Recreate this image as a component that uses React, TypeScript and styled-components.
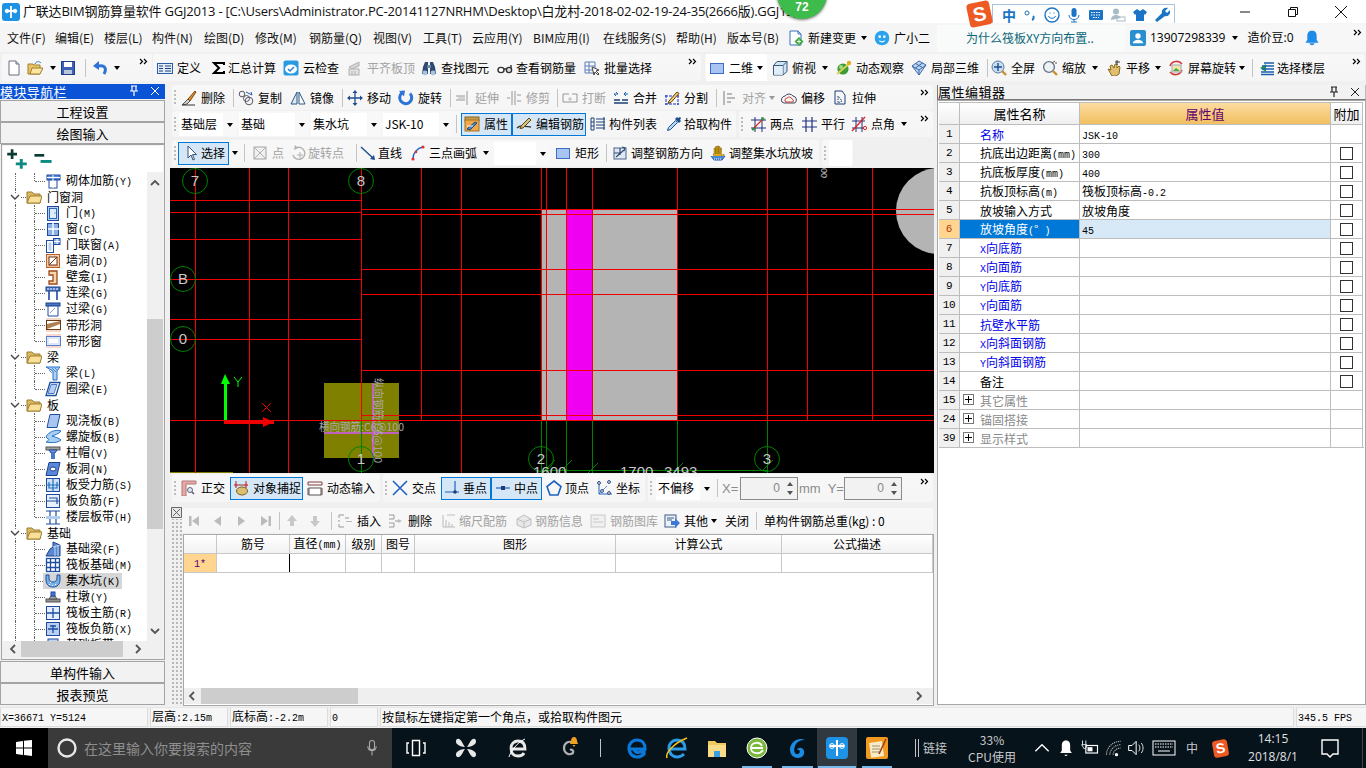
import React from 'react';
import styled, { createGlobalStyle } from 'styled-components';

const UI = `"Noto Sans CJK SC", "Noto Sans", sans-serif`;
const Global = createGlobalStyle`
  html, body { margin: 0; padding: 0; background: #f0f0f0; overflow: hidden; }
  * { box-sizing: border-box; }
  body { font-family: ${UI}; font-size: 12px; color: #000; }
`;

/* ---------- icons ---------- */
const S1 = (d: string, c = '#2a58b0', w = 1) => <path d={d} fill="none" stroke={c} strokeWidth={w} />;
const ICONS: Record<string, React.ReactNode> = {
  new: <><path d="M3 1h7l3 3v11H3z" fill="#fff" stroke="#68707c" /><path d="M10 1v3h3" fill="#dde" stroke="#68707c" /></>,
  open: <><path d="M1 4h5l1 1h6v9H1z" fill="#e8c468" stroke="#a07c2c" /><path d="M3 14l2-6h11l-3 6z" fill="#fbe6a2" stroke="#a07c2c" /><path d="M8 4c1-3 4-3 6-1" fill="none" stroke="#3a7ac0" /></>,
  save: <><rect x="1.5" y="1.5" width="13" height="13" fill="#3d62b8" stroke="#1f3f86" /><rect x="4" y="2" width="8" height="5" fill="#fff" /><rect x="4" y="10" width="8" height="4" fill="#b8c4d8" /></>,
  undo: <><path d="M12 14c3-5 1-9-5-8" fill="none" stroke="#2c74d8" strokeWidth="3" /><path d="M1 6l6-5v9z" fill="#2c74d8" /></>,
  define: <><rect x=".5" y="3.5" width="15" height="10" fill="#e4eefa" stroke="#2a5ca8" />{S1('M2 6h4M2 8.5h4M2 11h4M8 6h6M8 8.5h6M8 11h6', '#1d3f78')}</>,
  sigma: S1('M13 5V3H3l5 5-5 5h10v-2', '#000', 2),
  cloud: <><rect x=".5" y=".5" width="15" height="15" rx="2" fill="#2a9be0" /><ellipse cx="8" cy="9" rx="6" ry="4.5" fill="#fff" />{S1('M5 9l2 2 4-4', '#2a7fd0', 1.5)}</>,
  flush: <><path d="M2 7l10-5v4L5 9z" fill="#ccc" stroke="#999" /><rect x="2" y="9" width="10" height="6" fill="#ddd" stroke="#999" />{S1('M5 11v4M8 11v4', '#999')}</>,
  binoc: <><path d="M2 7l2-5h3v12H1z" fill="#2e4a70" /><path d="M14 7l-2-5H9v12h6z" fill="#2e4a70" /><rect x="6" y="5" width="4" height="3" fill="#6a88aa" /><circle cx="4" cy="13" r="2.4" fill="#a9c4e0" /><circle cx="12" cy="13" r="2.4" fill="#a9c4e0" /></>,
  glasses: <><ellipse cx="4" cy="10" rx="3" ry="2.6" fill="#fff" stroke="#333" strokeWidth="1.4" /><ellipse cx="12" cy="10" rx="2.6" ry="2.6" fill="#ddd" stroke="#333" strokeWidth="1.4" />{S1('M7 9h2M14 8V5', '#333', 1.4)}</>,
  batch: <>{S1('M1 2h10v11H1zM1 6h10M1 10h10M5 2v11', '#5a7fb8')}<path d="M8 7l7 3-3 1 3 3-1 1-3-3-1 3z" fill="#fff" stroke="#444" /></>,
  rect2d: <rect x="1.5" y="3.5" width="13" height="10" fill="#a8c4f0" stroke="#3d6cc4" />,
  cube: <><path d="M1.5 5.5L5 1.5h10v10l-4 3.5h-9.5z" fill="#cfe4f4" stroke="#3a5878" /><path d="M1.5 5.5H11V15M11 5.5l4-4" fill="none" stroke="#3a5878" /><rect x="2" y="6" width="9" height="9" fill="#e8f2fb" opacity=".7" /></>,
  orbit: <><circle cx="7" cy="9" r="5.6" fill="#3d9a3a" /><circle cx="5" cy="7" r="2" fill="#9fdc8a" />{S1('M1 14L14 3', '#dcd050', 2)}<circle cx="13" cy="3" r="2.2" fill="#e0b020" /></>,
  local3d: <><path d="M1 6l7-5 7 4-7 10z" fill="#bcd6f0" stroke="#3a68a8" />{S1('M1 6l7 4 7-5M8 10v5M4.5 3.5l7 4M11.5 3l-7 5', '#3a68a8')}</>,
  fit: <><circle cx="7" cy="7" r="6" fill="#c8dcf2" stroke="#5a7c9c" />{S1('M7 3v8M3 7h8', '#1d4f90', 1.4)}<path d="M11 11l4 4" stroke="#c89030" strokeWidth="2.4" /></>,
  zoom: <><circle cx="7" cy="7" r="5.4" fill="#eef2f6" stroke="#687888" strokeWidth="1.4" />{S1('M10 3l3-2M13 3h2', '#555')}<path d="M11 11l4 4" stroke="#c89030" strokeWidth="2.4" /></>,
  pan: <><path d="M2 9l3 1-1-4 2-1 2 3 1-4 2 0 0 4 2-2 1 1-1 7-3 2H6z" fill="#e0c070" stroke="#8a6a20" />{S1('M11 0v5M9 2h5', '#333')}</>,
  rotscreen: <>{S1('M2 6a7 7 0 0 1 12-2M14 10a7 7 0 0 1-12 2', '#d83838', 1.6)}<rect x="4" y="5" width="9" height="7" fill="#f4e4a8" stroke="#98a8b8" /><path d="M5 11l3-3 4 3z" fill="#4aa84a" /></>,
  floors: <><path d="M1 8l6-4v8z" fill="#2a9a40" />{S1('M5 3h10M3 6h12M3 9h12M2 12h13M2 14.5h13', '#1a5fb0', 1.3)}</>,
  newchange: <><path d="M2 1h8l3 3v11H2z" fill="#fff" stroke="#3a6cc0" /><path d="M10 1v3h3" fill="none" stroke="#3a6cc0" /><path d="M11 7l4.500 4.500L11 16l-4.500-4.500z" fill="#3aa83a" /><path d="M11 9.500v4M9 11.500h4" stroke="#fff" /></>,
  brush: <><path d="M1 15l6-6 2 2-3 3z" fill="#d0d0d0" stroke="#555" /><path d="M7 9l7-8 1 1-6 9z" fill="#d89030" stroke="#804810" /><path d="M1 15h13" stroke="#333" /></>,
  copy: <><circle cx="4" cy="4" r="2.8" fill="none" stroke="#556" /><circle cx="11" cy="11" r="3.8" fill="none" stroke="#556" /><circle cx="8.5" cy="8.5" r="3" fill="none" stroke="#556" />{S1('M8 2l6 3M14 5l-1-3', '#2a58b0')}</>,
  mirror: <><path d="M7 2v12H1z" fill="#dde8f8" stroke="#2a5880" /><path d="M9 2v12h6z" fill="#fff" stroke="#2a5880" /></>,
  move: <>{S1('M8 1v14M1 8h14', '#1d4f90', 1.3)}<path d="M8 0l2.5 3h-5zM8 16l2.5-3h-5zM0 8l3-2.5v5zM16 8l-3-2.5v5z" fill="#1d4f90" /></>,
  rotate: <>{S1('M12 3.5A6 6 0 1 1 4 3', '#2c74d8', 3)}<path d="M1 1l6-.5-1 6z" fill="#2c74d8" /></>,
  extend: <>{S1('M1 6h9M1 10h9M12 1v14', '#777')}<path d="M10 8H3" stroke="#999" /></>,
  trim: <>{S1('M6 1v14M9 1v14M1 8h3M11 5h4M11 11h4', '#777')}</>,
  break: <>{S1('M1 4h6M10 4h5M1 12h14M1 4v8M15 4v8', '#777')}<path d="M6 9h4M8 7v4" stroke="#9ab" /></>,
  merge: <><path d="M1 4h4l-2-2M1 4l2 2M15 4h-4l2-2M11 4l2 2" fill="none" stroke="#1a5fb0" />{S1('M1 10h6M9 10h6M1 13h14', '#1d3f78', 1.4)}</>,
  split: <><path d="M1 6h14M1 14h14M2 5v10M14 5v10" stroke="#1a2fd0" fill="none" strokeDasharray="3 1" /><path d="M5 11L13 2l2 1.4-8 9-3 1z" fill="#f0d080" stroke="#604000" /></>,
  align: <>{S1('M2 1v14M5 4h5M5 8h8M5 12h4', '#888', 1.5)}</>,
  offset: <><path d="M1 12a4 4 0 0 1 3-6 5 5 0 0 1 8 0 4 4 0 0 1 2 7H3z" fill="#f4f4f4" stroke="#404a60" /><path d="M4 11a2.5 2.5 0 0 1 2-3 3 3 0 0 1 5 1 2 2 0 0 1 1 3H5z" fill="none" stroke="#d04030" /></>,
  stretch: <>{S1('M3 1h7l3 4v9H3z', '#1d3f78')}<path d="M6 6v7l4-2z" fill="none" stroke="#1d3f78" strokeDasharray="1.5 1" /></>,
  attr: <><rect x="1" y="1" width="14" height="4" fill="#c8a050" stroke="#886020" /><rect x="1" y="4" width="14" height="11" fill="#f0a848" stroke="#a87020" /><path d="M3 13l8-7 2 1-7 7z" fill="#4a88d8" stroke="#284870" /><path d="M3 10h6" stroke="#fff" /></>,
  editbar: <><path d="M1 12c3-3 6-2 14-1" fill="none" stroke="#333" strokeWidth="1.4" /><path d="M5 10L13 2l2 2-8 8-3 .5z" fill="#d8c080" stroke="#604010" /></>,
  list: <>{S1('M1 2h3v12H1zM6 3h9M6 6h9M6 9h9M6 12h9M1 6h3M1 10h3M14 1v13', '#1d3f78')}</>,
  dropper: <><path d="M1.5 14.5l1-3 7-7 2 2-7 7z" fill="#b8d8f8" stroke="#1d4f90" /><path d="M9 3l2-2 1 1 2-1 1 1-1 2 1 1-2 2z" fill="#1d4f90" /></>,
  twopt: <>{S1('M1 4h15M1 12h15M5 1v15M12 1v15', '#203080')}<path d="M2 14L14 2" stroke="#d82020" strokeWidth="1.2" /><circle cx="3.5" cy="13" r="1.5" fill="#2a9a40" /><circle cx="13" cy="3" r="1.5" fill="#2a9a40" /></>,
  parallel: <>{S1('M1 5h15M1 11h15M5 1v15M11 1v15', '#203080', 1.2)}</>,
  ptangle: <>{S1('M1 5h13M1 12h13M5 1v15M11 1v15', '#203080')}<path d="M1 15L14 1" stroke="#e02020" strokeWidth="1.3" /><circle cx="14" cy="12" r="1.6" fill="#fff" stroke="#e02020" /></>,
  cursor: <path d="M4 1v12l3-3 2 5 1.5-.6-2-4.8h4z" fill="#fff" stroke="#385078" />,
  point: <><rect x="2" y="2" width="12" height="12" fill="#eee" stroke="#888" />{S1('M2 2l12 12M14 2L2 14', '#999')}</>,
  rotpt: <>{S1('M3 10A6 6 0 1 0 6 3', '#999', 1.4)}<path d="M5 0l3 3-4 2z" fill="#999" />{S1('M10 7v6M7 10h6', '#999')}</>,
  line: <><path d="M1 2l13 12" stroke="#1d4f90" strokeWidth="1.4" /><path d="M15 15l-5-1 4-4z" fill="#1d4f90" /></>,
  arc: <>{S1('M3 14C3 8 7 3 13 2', '#2060c0', 1.4)}<circle cx="3" cy="14" r="1.6" fill="#e03030" /><circle cx="13" cy="2" r="1.6" fill="#e03030" /><circle cx="6" cy="7" r="1.3" fill="#e03030" /></>,
  adjdir: <><rect x="2" y="3" width="12" height="11" fill="#dfe8f4" stroke="#4a6488" />{S1('M4 12L12 5M10 2l3 1-1 3M2 8h6M8 3v7', '#334c70', 1.2)}</>,
  adjslope: <><path d="M4 9V3h1.500v6-7.500H7V9 1h1.500v8-7.500H10V9 3h1.500v8l2-2 1 1-2 3H5L3 9z" fill="#d8a818" stroke="#886810" strokeWidth=".5" /><path d="M1 11l3 4h8l3-4" fill="#4a88d8" stroke="#2a58b0" /><path d="M4 14h8" stroke="#fff" strokeDasharray="1 1" /></>,
  ortho: <><path d="M1 1h14v3H5v12H1z" fill="#e8a8a8" stroke="#b07878" />{S1('M8 9l5 5', '#556', 1.4)}<circle cx="9" cy="10" r="2.5" fill="#dde8f4" stroke="#667" /></>,
  snap: <>{S1('M3 1v7M13 1v7M1 5h14', '#903030')}<ellipse cx="9" cy="11" rx="5.500" ry="4" fill="#d8c070" stroke="#806020" /><circle cx="3" cy="5" r="1.5" fill="#e04040" /><circle cx="13" cy="5" r="1.5" fill="#e04040" /></>,
  dyn: <>{S1('M1 2h14M1 5h14M1 2v3M15 2v3M1 8v7M15 8v7', '#804040')}<rect x="2" y="8" width="12" height="7" fill="#fff" stroke="#555" /></>,
  cross: S1('M1 1l14 14M15 1L1 15', '#1f62c0', 1.6),
  perp: <>{S1('M1 12h14M11 1v11', '#1f62c0', 1.2)}<circle cx="11" cy="12" r="1.8" fill="#1d3f78" /></>,
  mid: <>{S1('M1 8h14', '#1f62c0', 1.2)}<rect x="6" y="6" width="4" height="4" fill="#1d3f78" /></>,
  vertex: <path d="M8 1l7 5.500-3 8.500H4L1 6.500z" fill="none" stroke="#1f62c0" strokeWidth="1.6" />,
  coord: <>{S1('M3 1v13h13', '#1f62c0', 1)}<path d="M3 14l8-8" stroke="#1f62c0" strokeDasharray="2 1" /><circle cx="3" cy="3" r="1.4" fill="#fff" stroke="#1d3f78" /><circle cx="13" cy="2" r="1.4" fill="#fff" stroke="#1d3f78" /><circle cx="6" cy="11" r="1.4" fill="#fff" stroke="#1d3f78" /><circle cx="13" cy="13" r="1.4" fill="#fff" stroke="#1d3f78" /></>,
  first: <><rect x="3" y="3" width="2.500" height="10" fill="#bbb" /><path d="M13 3v10L6 8z" fill="#bbb" /></>,
  prev: <path d="M11 3v10L4 8z" fill="#bbb" />,
  next: <path d="M5 3v10l7-5z" fill="#bbb" />,
  last: <><rect x="10.500" y="3" width="2.500" height="10" fill="#bbb" /><path d="M3 3v10l7-5z" fill="#bbb" /></>,
  up: <path d="M8 2l5 6h-3v5H6V8H3z" fill="#c8c8c8" />,
  down: <path d="M8 14l5-6h-3V3H6v5H3z" fill="#c8c8c8" />,
  insert: <>{S1('M2 2h5M2 2v3M2 7v2M2 11v3h5M8 5h4', '#999')}<path d="M9 8h6v1H9z" fill="#bbb" /></>,
  del: <>{S1('M1 2h5v4M1 6h5M1 10h5v4H1M7 8h3', '#999')}<path d="M10 6v4l4-2z" fill="#bbb" /></>,
  scale: <>{S1('M2 2v12h12M5 14V7M8 14V9M11 14v-3M6 2l8 0', '#aaa')}</>,
  info: <><path d="M1 6l7-4 7 4v6l-7 3-7-3z" fill="#e4e4e4" stroke="#aaa" />{S1('M1 6l7 3 7-3M8 9v6', '#aaa')}</>,
  lib: <><rect x="1" y="2" width="14" height="12" fill="#eee" stroke="#bbb" />{S1('M3 6h6M3 9h10', '#bbb')}</>,
  other: <><rect x="1" y="2" width="11" height="12" fill="#eef2f8" stroke="#3a5a88" />{S1('M3 5h7M3 7h5', '#3a5a88')}<path d="M7 8h4V5l5 5-5 5v-3H7z" fill="#3d78d8" /></>,
  folder: <><path d="M1 3h5l2 2h6v9H1z" fill="#d8b860" stroke="#9c7c30" /><path d="M1 14l3-7h12l-2 7z" fill="#f8e098" stroke="#9c7c30" /></>,
  masonry: <><rect x="2" y="2" width="13" height="5" fill="#5a8ad8" stroke="#2048a0" /><rect x="2" y="2" width="13" height="5" fill="none" /><rect x="4" y="7" width="8" height="8" fill="#fff" stroke="#2048a0" />{S1('M8 2v13M2 4.500h13', '#fff')}</>,
  door: <><rect x="2.500" y="1.500" width="11" height="14" fill="#b8cff0" stroke="#2048a0" /><rect x="4.500" y="3.500" width="7" height="10" fill="#e0ecfa" stroke="#2a68c8" /><rect x="9.500" y="7.500" width="1" height="1" fill="#2048a0" /></>,
  window: <><rect x="2.500" y="2.500" width="11" height="12" fill="#8ab0e8" stroke="#2048a0" />{S1('M8 2v12M3 8h11', '#fff', 1.4)}</>,
  doorwin: <><rect x="1.500" y="3.500" width="7" height="12" fill="#fff" stroke="#2048a0" /><rect x="8.500" y="1.500" width="6.500" height="6" fill="#8ab0e8" stroke="#2048a0" />{S1('M12 2v5M9 4.500h6', '#fff')}<rect x="3.500" y="5.500" width="3" height="8" fill="#b8cff0" /></>,
  wallhole: <><rect x="1.500" y="1.500" width="13" height="13" fill="#f4d8c0" stroke="#b85820" />{S1('M1 5h14M1 9h14M1 13h14M5 1v14M10 1v14', '#e09868', .7)}<rect x="4" y="4" width="8" height="8" fill="#fff" stroke="#703010" />{S1('M4 12l8-8', '#703010')}</>,
  niche: <path d="M4 2h8v13H4v-3h4V6H4z" fill="#f4d8b0" stroke="#a04818" strokeWidth="1.300" />,
  lintel1: <><rect x="1" y="2" width="14" height="4" fill="#4878c8" stroke="#1d3f88" />{S1('M4 6v9M12 6v9', '#2048a0', 1.600)}<path d="M3 3v2M6 3v2M9 3v2M12 3v2" stroke="#fff" /></>,
  lintel2: <><rect x="1" y="2" width="14" height="3" fill="#4878c8" stroke="#1d3f88" /><path d="M3 5h10v10H3z" fill="#fff" stroke="#2048a0" /><path d="M5 12l5-5" stroke="#7a9ad8" /></>,
  stripe1: <><rect x="1" y="1" width="15" height="14" fill="#f4d8c8" /><rect x="1.500" y="3.500" width="14" height="9" fill="#fff" stroke="#6a3a10" /><path d="M2 12L15 7V4L2 7z" fill="#b08050" /></>,
  stripe2: <><rect x="1" y="1" width="15" height="14" fill="#f8d8d0" /><rect x="1.500" y="3.500" width="14" height="9" fill="#dce8fa" stroke="#5a7fc8" /><rect x="4" y="6" width="9" height="4" fill="#fff" /></>,
  beam: <><path d="M1 2h14l-3 4v9H8V6z" fill="#b0d0f4" stroke="#2870c8" />{S1('M4 5l3 3M7 3l4 4M10 3l2 2', '#2870c8', .8)}</>,
  ringbeam: <><path d="M5 1.500h10l-4 13H1z" fill="#fff" stroke="#1d4fa0" strokeWidth="1.300" /><path d="M6 3.500h6l-3 9H3z" fill="#b8d0f0" stroke="#4a78c8" /></>,
  slab: <path d="M5 1.500h10l-3 13H2z" fill="#a8c4f0" stroke="#1d4fa0" />,
  spiral: <><path d="M1 8c2-5 10-8 15-6-2 3-7 4-9 5 3 1 7 2 9 4-3 3-10 3-15 2 2-1 4-3 2-3z" fill="#a8d0f4" stroke="#2870c8" /></>,
  cap: <><rect x="1" y="2" width="14" height="3" fill="#a0a0a0" stroke="#555" /><path d="M4 5h8l-2 3H6z" fill="#6a9ae0" stroke="#2048a0" /><rect x="6" y="8" width="4" height="6" fill="#4a78c8" /></>,
  slabhole: <><path d="M4 1.500h11l-3 13H1z" fill="#5a88d8" stroke="#1d3f88" /><ellipse cx="8" cy="8" rx="3" ry="2" fill="#fff" stroke="#1d3f88" /></>,
  slabbar: <><rect x="1.500" y="1.500" width="13" height="13" fill="#d0e0f8" stroke="#2048a0" />{S1('M1 8h14M8 1v14M4 5v6h8V5', '#1d6fc0', 1.200)}</>,
  neg: <><rect x="1.500" y="1.500" width="13" height="13" fill="#e8f0fc" stroke="#2048a0" />{S1('M1 8h14M4 5h8v6', '#1d4fa0', 1.200)}</>,
  band: <>{S1('M1 2h14M1 15h14M5 2v13M11 2v13', '#1d4fa0', 1.200)}<rect x="1" y="7" width="14" height="3" fill="#b0cff0" /></>,
  fbeam: <><path d="M1 15l4-7 3-2V1l7 3v11z" fill="#5a88d0" stroke="#1d3f88" />{S1('M8 6l7-2M10 5v10M13 4v11', '#c0d8f4')}</>,
  raft: <><rect x="1.500" y="1.500" width="13" height="13" fill="#fff" stroke="#1d4fa0" strokeWidth="1.300" />{S1('M1 5.500h14M1 10.500h14M5.500 1v14M10.500 1v14', '#1d4fa0', 1.300)}</>,
  pit: <><path d="M1 2v4c0 6 3 8 7 8s7-2 7-8V2h-3v3c0 3-2 4-4 4S4 8 4 5V2z" fill="#7ab0e8" stroke="#1d4fa0" /><path d="M4 11l1 1M7 12l1 1M10 11l1 1M5 9l1 1" stroke="#fff" /></>,
  pier: <><rect x="1" y="10" width="14" height="3" fill="#909090" stroke="#555" /><path d="M4 10l2-3h4l2 3z" fill="#a8a8a8" stroke="#555" /><rect x="6" y="3" width="4" height="4" fill="#4a78c8" stroke="#2048a0" /></>,
  rmain: <><rect x="1.500" y="1.500" width="13" height="13" fill="#e4eefc" stroke="#2048a0" />{S1('M1 8h14M8 3v10', '#1d4fa0', 1.300)}</>,
  rneg: <><rect x="1.500" y="1.500" width="13" height="13" fill="#b8cff0" stroke="#2048a0" />{S1('M3 8h10M8 4v8M5 5h6', '#1d4fa0', 1.300)}</>,
  extra: <><rect x="3" y="2" width="10" height="12" fill="#c0d4f0" stroke="#2048a0" /></>,
};
const IconSvg = styled.svg.attrs({ viewBox: '0 0 16 16' })`
  width: 16px; height: 16px; flex: none; display: block;
`;
const Icon = ({ n }: { n: string }) => <IconSvg>{ICONS[n]}</IconSvg>;

const Caret = styled.i<{ $gray?: boolean }>`
  display: block; flex: none; width: 0; height: 0;
  border-left: 3.5px solid transparent; border-right: 3.5px solid transparent;
  border-top: 4px solid ${p => (p.$gray ? '#999' : '#000')};
`;

/* ---------- text with narrow latin, as bitmap SimSun draws it ---------- */
const Lat = styled.span`font-family: "Liberation Mono", monospace; font-size: 10px;`;
const Mixed = ({ t }: { t: string }) => (
  <>{t.split(/([\x00-\x7f]+)/).map((s, i) => (i % 2 ? <Lat key={i}>{s}</Lat> : s))}</>
);

/* ---------- toolbars ---------- */
type Item =
  | { k: 't'; i?: string; l?: string; w?: number; gray?: boolean; on?: boolean; white?: boolean; p?: number; gap?: number }
  | { k: 'c'; w: number; gray?: boolean; white?: boolean }
  | { k: 'p'; w: number; white?: boolean }
  | { k: 's'; w: number }
  | { k: 'g'; w: number }
  | { k: 'b'; w: number; l?: string }
  | { k: 'n'; w: number }
  | { k: 'x'; w: number; l: string };
const t = (i: string | undefined, l: string | undefined, w: number | undefined, o: any = {}): Item => ({ k: 't', i, l, w, ...o });
const c = (w: number, o: any = {}): Item => ({ k: 'c', w, ...o });
const p = (w: number, white?: boolean): Item => ({ k: 'p', w, white });
const s = (w: number): Item => ({ k: 's', w });
const g = (w: number): Item => ({ k: 'g', w });
const b = (w: number, l?: string): Item => ({ k: 'b', w, l });
const GR = { gray: true };

const Bar = styled.div<{ $w: number; $h?: number }>`
  display: flex; align-items: center; flex: none; position: relative;
  width: ${x => x.$w}px; height: ${x => x.$h ?? 27}px;
  background: linear-gradient(#f8f8f8, #f5f5f5); border-radius: 3px;
`;
const Tool = styled.div<{ $w?: number; $gray?: boolean; $on?: boolean; $white?: boolean; $p?: number; $gap?: number }>`
  display: flex; align-items: center; flex: none; height: ${x => (x.$on ? '23px' : '100%')};
  ${x => (x.$w ? `width: ${x.$w}px;` : '')}
  gap: ${x => x.$gap ?? 4}px; padding-left: ${x => x.$p ?? 0}px;
  color: ${x => (x.$gray ? '#a2a2a2' : '#000')}; font-size: 12px; white-space: nowrap; line-height: 1;
  ${x => (x.$white ? 'background: #fff;' : '')}
  ${x => (x.$on ? 'background: #d5e7f7; border: 1px solid #0078d7;' : '')}
  ${x => (x.$gray ? 'svg { filter: grayscale(1); opacity: .75; }' : '')}
`;
const CaretBox = styled.div<{ $w: number; $white?: boolean }>`
  display: flex; align-items: center; justify-content: center; flex: none; height: 100%;
  width: ${x => x.$w}px; ${x => (x.$white ? 'background: #fff;' : '')}
`;
const Gap = styled.div<{ $w: number; $white?: boolean }>`
  flex: none; height: 100%; width: ${x => x.$w}px; ${x => (x.$white ? 'background: #fff;' : '')}
`;
const Sep = styled.div<{ $w: number }>`
  flex: none; width: ${x => x.$w}px; height: 18px; display: flex; justify-content: center;
  &::before { content: ''; width: 1px; background: #c4c4c4; }
`;
const Grip = styled.div<{ $w: number }>`
  flex: none; width: ${x => x.$w}px; height: 15px; padding-left: 2px;
  &::before { content: ''; display: block; width: 2px; height: 100%;
    background: repeating-linear-gradient(#bcbcbc 0 2px, transparent 2px 4px); }
`;
const Combo = styled.div<{ $w: number }>`
  flex: none; width: ${x => x.$w}px; height: 23px; background: #fff; display: flex; align-items: center;
  font-size: 12px; padding-left: 2px; position: relative; line-height: 1;
  &::after { content: ''; position: absolute; right: 0; top: 0; bottom: 0; width: 13px; background: #f8f8f8; }
`;
const ComboCaret = styled(Caret)`position: absolute; right: 3px; top: 10px; z-index: 1;`;
const Spin = styled.div<{ $w: number }>`
  flex: none; width: ${x => x.$w}px; height: 23px; border: 1px solid #8a8a8a; background: #f2f2f2;
  display: flex; align-items: center; justify-content: flex-end; padding-right: 17px; color: #888; font-size: 12px;
  font-family: "Liberation Sans", sans-serif; position: relative;
`;
const SpinUp = styled.i`position: absolute; right: 4px; top: 4px; width: 0; height: 0;
  border-left: 3px solid transparent; border-right: 3px solid transparent; border-bottom: 4px solid #555;`;
const SpinDown = styled.i`position: absolute; right: 4px; bottom: 4px; width: 0; height: 0;
  border-left: 3px solid transparent; border-right: 3px solid transparent; border-top: 4px solid #555;`;
const GrayText = styled.div<{ $w: number }>`
  flex: none; width: ${x => x.$w}px; color: #8c8c8c; font-size: 13px; white-space: pre;
  font-family: "Liberation Sans", sans-serif; line-height: 1; padding-left: 1px;
`;
const ChevSvg = styled.svg.attrs({ viewBox: '0 0 9 7' })`
  position: absolute; right: 4px; top: 4px; width: 9px; height: 7px;
`;
const Chev = () => <ChevSvg><path d="M1 1l2.500 2.500L1 6M5 1l2.500 2.500L5 6" fill="none" stroke="#000" strokeWidth="1.200" /></ChevSvg>;

const Tools = ({ items }: { items: Item[] }) => (
  <>
    {items.map((it, i) => {
      switch (it.k) {
        case 't':
          return (
            <Tool key={i} $w={it.w} $gray={it.gray} $on={it.on} $white={it.white} $p={it.p} $gap={it.gap}>
              {it.i && <Icon n={it.i} />}
              {it.l && <span>{it.l}</span>}
            </Tool>
          );
        case 'c': return <CaretBox key={i} $w={it.w} $white={it.white}><Caret $gray={it.gray} /></CaretBox>;
        case 'p': return <Gap key={i} $w={it.w} $white={it.white} />;
        case 's': return <Sep key={i} $w={it.w} />;
        case 'g': return <Grip key={i} $w={it.w} />;
        case 'b': return <Combo key={i} $w={it.w}>{it.l}<ComboCaret /></Combo>;
        case 'n': return <Spin key={i} $w={it.w}>0<SpinUp /><SpinDown /></Spin>;
        case 'x': return <GrayText key={i} $w={it.w}>{it.l}</GrayText>;
      }
    })}
  </>
);

/* ---------- page frame ---------- */
const Root = styled.div`
  width: 1366px; height: 768px; display: flex; flex-direction: column; position: relative; overflow: hidden; background: #f0f0f0;
`;
const TitleBar = styled.div`
  flex: none; height: 23px; background: #fff; display: flex; align-items: center; padding-left: 2px;
`;
const AppLogo = styled.svg.attrs({ viewBox: '0 0 18 18' })`width: 18px; height: 18px; flex: none; margin-right: 3px;`;
const TitleText = styled.div`
  font-family: "Open Sans", "Noto Sans CJK SC", sans-serif; font-size: 13px; letter-spacing: -.2px; white-space: nowrap; width: 772px; overflow: hidden; line-height: 23px; color: #111;
`;
const WinBtns = styled.div`margin-left: auto; display: flex; align-items: center; height: 100%;`;
const WinBtn = styled.svg.attrs({ viewBox: '0 0 12 12' })`width: 12px; height: 12px; margin: 0 19px 0 17px; overflow: visible;`;
const Badge = styled.div`
  position: absolute; left: 777px; top: -31px; width: 50px; height: 50px; border-radius: 50%;
  background: #3dbb4b; box-shadow: 0 1px 3px rgba(0,0,0,.55); color: #fff; font-family: "Liberation Sans", sans-serif; font-size: 12px; font-weight: 700;
  display: flex; align-items: flex-end; justify-content: center; padding-bottom: 6px; line-height: 1;
`;
const Ime = styled.div`
  position: absolute; left: 968px; top: 3px; width: 207px; height: 24px; display: flex; align-items: center;
`;
const ImeS = styled.div`
  position: absolute; left: 0; top: -1px; width: 23px; height: 24px; border-radius: 4px; background: #ee5a24; transform: rotate(-12deg);
  color: #fff; font-family: "Liberation Sans", sans-serif; font-weight: 700; font-size: 20px; line-height: 24px; text-align: center; z-index: 1;
`;
const ImeBar = styled.div`
  margin-left: 24px; width: 183px; height: 23px; background: #fff; border: 1px solid #a9c3dc; display: flex; align-items: center; padding-left: 9px; gap: 5px; color: #1b74c5;
`;
const ImeZh = styled.span`font-size: 14px; font-weight: 700; line-height: 1; width: 15px;`;
const ImeSvg = styled.svg.attrs({ viewBox: '0 0 16 16' })`width: 16px; height: 16px; flex: none; margin-right: 1px;`;

const MenuBar = styled.div`flex: none; height: 29px; display: flex; align-items: center; background: #f5f5f5; padding-left: 7px; position: relative;`;
const MenuItem = styled.div<{ $w: number }>`flex: none; width: ${x => x.$w}px; font-size: 12px; white-space: nowrap; line-height: 1; color: #111;`;
const AskPanel = styled.div`
  flex: none; width: 429px; height: 27px; margin-top: 1px; background: #f7f7f7; border-radius: 3px; display: flex; align-items: center; position: relative; font-size: 12px; line-height: 1;
`;
const Ask = styled.div`
  width: 188px; height: 100%; background: #f9fbfb; color: #0c6878; display: flex; align-items: center; padding-left: 29px; flex: none; font-size: 12px;
`;
const AskUser = styled.div<{ $p: number }>`display: flex; align-items: center; gap: 4px; padding-left: ${x => x.$p}px; font-size: 12px; font-family: "Open Sans", "Noto Sans CJK SC", sans-serif;`;
const TopRow = styled.div`flex: none; height: 32px; display: flex; padding: 2px 2px 0; gap: 1px;`;

const Main = styled.div`flex: none; height: 623px; display: flex;`;
const Left = styled.div`flex: none; width: 165px; display: flex; flex-direction: column;`;
const NavTitle = styled.div`
  flex: none; height: 15px; background: #0a52d6; color: #fff; font-size: 13px; letter-spacing: .4px; line-height: 15px; padding-left: 0; position: relative; margin-bottom: 1px;
`;
const PaneCtl = styled.div<{ $dark?: boolean }>`position: absolute; right: 4px; top: 1px; display: flex; gap: 9px; color: ${x => (x.$dark ? '#222' : '#fff')};`;
const CtlSvg = styled.svg.attrs({ viewBox: '0 0 12 12' })`width: 12px; height: 12px; display: block;`;
const Ctl = () => (
  <>
    <CtlSvg><path d="M3 1h6M4 1v5h4V1M2 6h8M6 6v5" fill="none" stroke="currentColor" strokeWidth="1.200" /></CtlSvg>
    <CtlSvg><path d="M2 2l8 8M10 2l-8 8" fill="none" stroke="currentColor" /></CtlSvg>
  </>
);
const NavBtn = styled.div`
  flex: none; height: 22px; border: 1px solid #a4a4a4; background: #f2f2f2; font-size: 13px; display: flex; align-items: center; justify-content: center; line-height: 1;
`;
const TreePane = styled.div`
  flex: none; height: 516px; border: 1px solid #a4a4a4; background: #f2f2f2; padding: 1px; display: flex; flex-direction: column; margin: 0 0 1px 1px; width: 164px;
`;
const TreeTools = styled.div`flex: none; height: 26px; background: #fff; display: flex; align-items: center; padding-left: 3px; gap: 4px;`;
const TreeBtnSvg = styled.svg.attrs({ viewBox: '0 0 18 18' })`width: 22px; height: 22px;`;
const TreeBody = styled.div`flex: none; height: 469px; display: flex;`;
const Tree = styled.div`flex: none; width: 144px; background: #fff; overflow: hidden; padding-top: 1px;`;
const Row = styled.div<{ $group?: boolean; $last?: boolean }>`
  height: 16px; display: flex; align-items: center; position: relative; white-space: nowrap; font-size: 12px; line-height: 1;
  padding-left: ${x => (x.$group ? '23px' : '42px')};
  &::before { content: ''; position: absolute; left: 12px; top: 0; bottom: 0; border-left: 1px dotted #666; }
  ${x => (x.$group ? '' : `&::after { content: ''; position: absolute; left: 31px; top: 0;
     height: ${x.$last ? '8px' : '100%'}; border-left: 1px dotted #666; }`)}
`;
const HDot = styled.i`position: absolute; left: 32px; top: 8px; width: 10px; border-top: 1px dotted #666;`;
const HDotG = styled.i`position: absolute; left: 18px; top: 8px; width: 5px; border-top: 1px dotted #666;`;
const RowBody = styled.div<{ $sel?: boolean }>`
  display: flex; align-items: center; gap: 5px; height: 16px; position: relative; z-index: 1;
  ${x => (x.$sel ? 'background: #d6d6d6; margin-left: -2px; padding: 0 2px;' : '')}
`;
const GroupBody = styled.div`display: flex; align-items: center; gap: 5px; height: 16px; position: relative; z-index: 1;`;
const Down = styled.svg.attrs({ viewBox: '0 0 10 7' })`position: absolute; left: 7px; top: 5px; width: 10px; height: 7px; z-index: 1; background: #fff;`;
const VScroll = styled.div`flex: none; width: 16px; background: #f0f0f0; display: flex; flex-direction: column; align-items: center;`;
const ArrowSvg = styled.svg.attrs({ viewBox: '0 0 10 10' })`width: 10px; height: 10px; flex: none;`;
const Thumb = styled.div<{ $h?: number; $w?: number }>`
  flex: none; background: #cdcdcd; ${x => (x.$h ? `height: ${x.$h}px; width: 100%;` : '')} ${x => (x.$w ? `width: ${x.$w}px; height: 100%;` : '')}
`;
const VSpace = styled.div<{ $h: number }>`flex: none; height: ${x => x.$h}px;`;
const HScroll = styled.div<{ $l: number }>`
  flex: none; height: 16px; background: #f0f0f0; display: flex; align-items: center; padding-left: ${x => x.$l}px; position: relative;
`;
const HArrow = styled(ArrowSvg)<{ $side: 'l' | 'r'; $o: number }>`position: absolute; ${x => (x.$side === 'l' ? 'left' : 'right')}: ${x => x.$o}px; top: 3px;`;

const Split = styled.div`flex: none; width: 5px;`;
const Center = styled.div`flex: none; width: 767px; padding-top: 1px; display: flex; flex-direction: column;`;
const BarRow = styled.div<{ $mt?: number }>`flex: none; display: flex; gap: 3px; padding-left: 2px; margin-top: ${x => x.$mt ?? 0}px;`;
const Canvas = styled.svg.attrs({ viewBox: '170 168 764 305' })`
  flex: none; display: block; width: 764px; height: 305px; margin-top: 2px; background: #000;
`;
const GridPane = styled.div`flex: none; height: 200px; margin-top: 3px; display: flex;`;
const GripCol = styled.div`flex: none; width: 12px; position: relative;
  background-image: radial-gradient(#b8b8b8 40%, transparent 42%); background-size: 4px 4px; background-position: 1px 16px; background-repeat: repeat;
  background-clip: content-box; padding-top: 14px;
`;
const CloseBox = styled.svg.attrs({ viewBox: '0 0 11 11' })`position: absolute; left: 1px; top: 2px; width: 11px; height: 11px; background: #e8e8e8;`;
const GridBody = styled.div`flex: none; width: 752px; display: flex; flex-direction: column;`;
const GridBar = styled(Bar)`height: 25px; margin-top: 3px; width: 751px;`;
const GridTable = styled.div`flex: none; height: 172px; background: #fff; border: 1px solid #a8a8a8; margin-top: 1px; margin-left: 1px; width: 751px; position: relative; display: flex; flex-direction: column;`;
const GHead = styled.div`flex: none; display: flex; height: 19px; border-bottom: 1px solid #c8c8c8; background: linear-gradient(#fff,#f2f2f2);`;
const GRow = styled.div`flex: none; display: flex; height: 19px; border-bottom: 1px solid #c8c8c8;`;
const GCell = styled.div<{ $w: number; $cur?: boolean; $num?: boolean }>`
  flex: none; width: ${x => x.$w}px; display: flex; align-items: center; justify-content: center; font-size: 12px; line-height: 1;
  border-right: 1px solid ${x => (x.$cur ? '#000' : '#c8c8c8')};
  ${x => (x.$num ? 'background: #ffd590; color: #50007a;' : '')}
`;
const GridScroll = styled(HScroll)`margin-top: auto; background: #efefef; height: 16px; margin-bottom: 1px;`;

const Right = styled.div`flex: none; width: 429px; display: flex; flex-direction: column; padding-top: 1px;`;
const PropTitle = styled.div`
  flex: none; height: 15px; background: #f2f2f2; border: 1px solid #777; border-top: 0; border-right-color: #bbb; font-size: 13px; letter-spacing: .5px; line-height: 14px; position: relative;
`;
const PropPane = styled.div`
  flex: none; height: 605px; background: #fff; border: 1px solid #a8a8a8; padding: 1px;
`;
const PropGrid = styled.div`
  display: grid; grid-template-columns: 21px 120px 251px 32px; border-bottom: 1px solid #bdbdbd; width: 425px;
`;
const Cell = styled.div<{ $h?: number; $kind?: string; $color?: string }>`
  height: ${x => x.$h ?? 19}px; border-right: 1px solid #bdbdbd; border-top: 1px solid #bdbdbd; display: flex; align-items: center; font-size: 12px; line-height: 1; white-space: nowrap; position: relative;
  color: ${x => x.$color ?? '#000'};
  ${x => x.$kind === 'num' ? 'justify-content: center; background: #f0f0f0; font-family: "Liberation Mono", monospace; font-size: 11px; letter-spacing: -.4px;' : ''}
  ${x => x.$kind === 'numsel' ? 'justify-content: center; background: #ffd590; color: #b83c10; font-family: "Liberation Mono", monospace; font-size: 11px;' : ''}
  ${x => x.$kind === 'name' ? 'padding: 2px 0 0 20px;' : ''}
  ${x => x.$kind === 'namesel' ? 'padding: 2px 0 0 20px; background: #0078d7; color: #fff;' : ''}
  ${x => x.$kind === 'val' ? 'padding: 1px 0 0 2px;' : ''}
  ${x => x.$kind === 'valsel' ? 'padding: 1px 0 0 2px; background: #d7e8f7;' : ''}
  ${x => x.$kind === 'chk' ? 'justify-content: center;' : ''}
  ${x => x.$kind === 'hd' ? 'justify-content: center; background: linear-gradient(#fff,#efefef); font-size: 13px;' : ''}
  ${x => x.$kind === 'hdv' ? 'justify-content: center; background: linear-gradient(#fcdca0,#f0bf60); color: #640070; font-size: 13px;' : ''}
`;
const Check = styled.i`display: block; width: 13px; height: 13px; border: 1px solid #333; background: #fff;`;
const PlusBox = styled.i`
  position: absolute; left: 3px; top: 3px; width: 11px; height: 11px; border: 1px solid #777; background: #fff;
  &::before { content: ''; position: absolute; left: 1px; right: 1px; top: 4px; height: 1px; background: #000; }
  &::after { content: ''; position: absolute; top: 1px; bottom: 1px; left: 4px; width: 1px; background: #000; }
`;

const Status = styled.div`flex: none; height: 21px; display: flex; gap: 2px; background: #f0f0f0; padding-bottom: 1px;`;
const StatusCell = styled.div<{ $w: number }>`
  flex: none; width: ${x => x.$w}px; border: 1px solid #dcdcdc; border-top-color: #e6e6e6; background: #f6f6f6; display: flex; align-items: center; font-size: 12px; line-height: 1; padding-left: 1px; white-space: nowrap;
`;
const Task = styled.div`flex: none; height: 40px; display: flex; align-items: stretch; background: #07131b; color: #fff; position: relative;`;
const Start = styled.div`flex: none; width: 48px; background: #000; display: flex; align-items: center; justify-content: center;`;
const Search = styled.div`
  flex: none; width: 344px; background: #3a3a3a; display: flex; align-items: center; padding-left: 9px; color: #8e8e8e; font-size: 14px; position: relative; line-height: 1; gap: 3px;
`;
const Slot = styled.div<{ $w: number; $u?: number; $act?: boolean }>`
  flex: none; width: ${x => x.$w}px; display: flex; align-items: center; justify-content: center; position: relative; font-size: 12px; line-height: 1; color: #c8c8c8;
  ${x => (x.$act ? 'background: #30393f;' : '')}
  ${x => (x.$u ? `&::after { content: ''; position: absolute; bottom: 0; left: 50%; margin-left: -${x.$u / 2}px; width: ${x.$u}px; height: 2px; background: #76b9ed; }` : '')}
`;
const TaskSvg = styled.svg.attrs({ viewBox: '0 0 24 24' })`width: 24px; height: 24px; flex: none; display: block;`;
const TraySvg = styled(TaskSvg)`width: 20px; height: 20px;`;
const MiniSvg = styled(TaskSvg)`width: 16px; height: 16px;`;
const Cpu = styled.div`flex: none; width: 48px; display: flex; flex-direction: column; align-items: center; justify-content: center; gap: 5px; font-size: 12px; line-height: 1; color: #c8c8c8;`;
const Clock = styled.div`flex: none; width: 70px; display: flex; flex-direction: column; align-items: center; justify-content: center; gap: 6px; font-size: 12px; line-height: 1; color: #e0e0e0; font-family: "Open Sans", sans-serif;`;
const Grow = styled.div`flex: 1;`;
const Edge = styled.div`flex: none; width: 1px; background: #444; margin-right: 3px;`;
const SogouTile = styled.div`
  width: 15px; height: 17px; background: #ee5a24; border-radius: 3px; transform: rotate(-10deg); color: #fff; font: 700 14px/17px "Liberation Sans", sans-serif; text-align: center;
`;

/* ---------- data ---------- */
const MENU: [string, number][] = [['文件(F)', 48], ['编辑(E)', 49], ['楼层(L)', 48], ['构件(N)', 52], ['绘图(D)', 51], ['修改(M)', 54], ['钢筋量(Q)', 64], ['视图(V)', 50], ['工具(T)', 49], ['云应用(Y)', 61], ['BIM应用(I)', 70], ['在线服务(S)', 73], ['帮助(H)', 51], ['版本号(B)', 61]];
const TB1: Item[] = [p(4), t('new', undefined, 21), t('open', undefined, 19), c(14), t('save', undefined, 22), s(7), p(3), t('undo', undefined, 19), c(12)];
const TB2: Item[] = [p(4), t('define', '定义', 54), t('sigma', '汇总计算', 72, { gap: 1 }), t('cloud', '云检查', 64), t('flush', '平齐板顶', 74, GR), t('binoc', '查找图元', 76), t('glasses', '查看钢筋量', 87, { gap: 3 }), t('batch', '批量选择', 70)];
const TB3: Item[] = [p(1), p(3, true), t('rect2d', '二维', 44, { white: true }), c(14, { white: true }), p(5), t('cube', '俯视', 47), c(12), p(5), t('orbit', '动态观察', 75), t('local3d', '局部三维', 73), s(7), t('fit', '全屏', 51), t('zoom', '缩放', 47), c(12), p(5), t('pan', '平移', 46), c(12), p(4), t('rotscreen', '屏幕旋转', 70), c(8), s(13), t('floors', '选择楼层', 70, { gap: 2 })];
const RA: Item[] = [g(9), t('brush', '删除', 48), s(9), t('copy', '复制', 52), t('mirror', '镜像', 47), s(10), t('move', '移动', 51), t('rotate', '旋转', 47), s(10), t('extend', '延伸', 51, GR), t('trim', '修剪', 47, GR), s(9), t('break', '打断', 51, GR), t('merge', '合并', 51), t('split', '分割', 47), s(11), t('align', '对齐', 45, GR), c(10, GR), p(4), t('offset', '偏移', 51), t('stretch', '拉伸', 50)];
const RB1: Item[] = [g(7), b(57, '基础层'), p(3), b(69, '基础'), p(3), b(69, '集水坑'), p(3), b(69, 'JSK-10'), s(9), t('attr', '属性', 51, { on: true, p: 2 }), t('editbar', '编辑钢筋', 74, { on: true, p: 3 }), p(4), t('list', '构件列表', 76, { gap: 3 }), t('dropper', '拾取构件', 70, { gap: 2 })];
const RB2: Item[] = [g(11), t('twopt', '两点', 51), t('parallel', '平行', 50), t('ptangle', '点角', 48), c(10)];
const RC1: Item[] = [g(6), t('cursor', '选择', 51, { on: true, p: 5, gap: 1 }), c(12), s(6), p(5), t('point', '点', 38, GR), t('rotpt', '旋转点', 62, { gap: 2, gray: true }), s(8), t('line', '直线', 50, { gap: 2 }), t('arc', '三点画弧', 70, { gap: 3 }), c(12), p(2), b(55), p(6), t('rect2d', '矩形', 48), s(6), p(3), t('adjdir', '调整钢筋方向', 98, { gap: 3 }), t('adjslope', '调整集水坑放坡', 105, { gap: 3 })];
const RD1: Item[] = [g(9), t('ortho', '正交', 48), p(1), t('snap', '对象捕捉', 73, { on: true, p: 2 }), p(4), t('dyn', '动态输入', 70)];
const RD2: Item[] = [g(9), t('cross', '交点', 49), t('perp', '垂点', 50, { on: true, p: 2, gap: 3 }), t('mid', '中点', 51, { on: true, p: 3, gap: 3 }), p(4), t('vertex', '顶点', 50, { gap: 3 }), t('coord', '坐标', 50)];
const RD3: Item[] = [g(8), b(57, '不偏移'), s(8), { k: 'x', w: 19, l: 'X=' }, { k: 'n', w: 58 }, { k: 'x', w: 46, l: 'mm  Y=' }, { k: 'n', w: 58 }];
const GT: Item[] = [p(4), t('first', undefined, 24), t('prev', undefined, 23), t('next', undefined, 25), t('last', undefined, 19), s(4), p(3), t('up', undefined, 23), t('down', undefined, 20), s(8), p(2), t('insert', '插入', 51), t('del', '删除', 53), t('scale', '缩尺配筋', 75, { gap: 2, gray: true }), t('info', '钢筋信息', 74, { gap: 3, gray: true }), t('lib', '钢筋图库', 74, GR), t('other', '其他', 46), c(8), p(7), t(undefined, '关闭', 28), s(6), p(5), t(undefined, '单构件钢筋总重(kg) : 0', undefined)];

type T = { g?: boolean; i?: string; l: string; last?: boolean; sel?: boolean };
const TREE: T[] = [
  { i: 'masonry', l: '砌体加筋(Y)', last: true },
  { g: true, l: '门窗洞' },
  { i: 'door', l: '门(M)' }, { i: 'window', l: '窗(C)' }, { i: 'doorwin', l: '门联窗(A)' }, { i: 'wallhole', l: '墙洞(D)' }, { i: 'niche', l: '壁龛(I)' }, { i: 'lintel1', l: '连梁(G)' }, { i: 'lintel2', l: '过梁(G)' }, { i: 'stripe1', l: '带形洞' }, { i: 'stripe2', l: '带形窗', last: true },
  { g: true, l: '梁' },
  { i: 'beam', l: '梁(L)' }, { i: 'ringbeam', l: '圈梁(E)', last: true },
  { g: true, l: '板' },
  { i: 'slab', l: '现浇板(B)' }, { i: 'spiral', l: '螺旋板(B)' }, { i: 'cap', l: '柱帽(V)' }, { i: 'slabhole', l: '板洞(N)' }, { i: 'slabbar', l: '板受力筋(S)' }, { i: 'neg', l: '板负筋(F)' }, { i: 'band', l: '楼层板带(H)', last: true },
  { g: true, l: '基础' },
  { i: 'fbeam', l: '基础梁(F)' }, { i: 'raft', l: '筏板基础(M)' }, { i: 'pit', l: '集水坑(K)', sel: true }, { i: 'pier', l: '柱墩(Y)' }, { i: 'rmain', l: '筏板主筋(R)' }, { i: 'rneg', l: '筏板负筋(X)' }, { i: 'extra', l: '基础板带(W)' },
];

type P = [string, string, string?, boolean?];
const PROPS: P[] = [
  ['1', '名称', 'JSK-10'], ['2', '抗底出边距离(mm)', '300'], ['3', '抗底板厚度(mm)', '400'], ['4', '抗板顶标高(m)', '筏板顶标高-0.2'], ['5', '放坡输入方式', '放坡角度'], ['6', '放坡角度(° )', '45'],
  ['7', 'X向底筋'], ['8', 'X向面筋'], ['9', 'Y向底筋'], ['10', 'Y向面筋'], ['11', '抗壁水平筋'], ['12', 'X向斜面钢筋'], ['13', 'Y向斜面钢筋'], ['14', '备注'],
];
const BLUE = '#0000e6';
const BLUE_ROWS = new Set(['1', '7', '8', '9', '10', '11', '12', '13']);

const COLS: [string, number][] = [['', 33], ['筋号', 73], ['直径(mm)', 56], ['级别', 36], ['图号', 33], ['图形', 201], ['计算公式', 166], ['公式描述', 151]];

const RED = '#f00000';
const VL: [number, number, number][] = [[195, 168, 473], [249, 168, 473], [288, 168, 473], [361, 168, 420], [421, 168, 420], [461, 168, 473], [541, 168, 420], [546, 168, 420], [566, 168, 420], [592, 168, 420], [677, 168, 420], [767, 168, 420], [807, 168, 420], [872, 168, 420]];
const HL: [number, number, number][] = [[200, 170, 361], [212, 170, 361], [239, 170, 361], [279, 170, 361], [319, 170, 361], [339, 170, 361], [209, 361, 934], [214, 361, 934], [269, 361, 934], [294, 361, 934], [370, 361, 934], [415, 361, 934], [420, 170, 934]];
const AXES: [number, number, string][] = [[195, 181, '7'], [361, 181, '8'], [183, 279, 'B'], [183, 339, '0'], [361, 459, '1'], [541, 459, '2'], [767, 459, '3']];
const CadText = styled.text<{ $s?: number }>`font-family: "Liberation Sans", sans-serif; font-size: ${x => x.$s ?? 15}px; fill: #c8c8c8;`;
const CadCjk = styled.text`font-family: "Noto Sans CJK SC", sans-serif; font-size: 11px; fill: #a8a8a8;`;

const Cad = () => (
  <Canvas>
    <rect x="541" y="209" width="136" height="211" fill="#b4b4b4" />
    <rect x="566" y="209" width="26" height="211" fill="#f000f0" />
    <circle cx="939" cy="211" r="43" fill="#b4b4b4" />
    <rect x="324" y="383" width="75" height="75" fill="#808000" />
    <g shapeRendering="crispEdges">
      <path d="M373 383V458M324 433H399" stroke="#c060c0" strokeWidth="2" />
      <path d="M170 472.500H233" stroke="#808000" />
      {[361, 541, 546, 566, 592, 677, 767].map(x => <path key={x} d={`M${x + .5} 420V473`} stroke="#008000" />)}
      <path d="M541 470.500H767" stroke="#008000" />
      {VL.map(([x, a, e]) => <path key={`v${x}`} d={`M${x + .5} ${a}V${e}`} stroke={RED} />)}
      {HL.map(([y, a, e]) => <path key={`h${y}`} d={`M${a} ${y + .5}H${e}`} stroke={RED} />)}
    </g>
    <path d="M562 470l10-10M588 473l10-10M673 473l10-10M763 470l10-10M545 470l10-10" stroke="#008000" />
    {AXES.map(([x, y, l]) => (
      <g key={l}>
        <circle cx={x} cy={y} r="12.500" fill="none" stroke="#008000" />
        <CadText x={x} y={y + 5} textAnchor="middle">{l}</CadText>
      </g>
    ))}
    <path d="M225 374l-4 10h3v38h3v-38h3z" fill="#00ff00" />
    <rect x="224" y="420" width="50" height="4" fill="#f00000" />
    <path d="M263 417l11 5-11 5z" fill="#f00000" />
    <path d="M234 377l4 5 4-5M238 382v5" fill="none" stroke="#00ff00" />
    <path d="M262 403l9 9M271 403l-9 9" fill="none" stroke="#f00000" />
    <CadCjk x="319" y="431" textLength={85} lengthAdjust="spacingAndGlyphs">横向钢筋:C6@100</CadCjk>
    <CadCjk transform="translate(374 378) rotate(90)" textLength={85} lengthAdjust="spacingAndGlyphs">纵向钢筋:C6@100</CadCjk>
    <CadText x="533" y="477" $s={15}>1600</CadText>
    <CadText x="620" y="477" $s={15}>1700</CadText>
    <CadText x="664" y="477" $s={15}>3493</CadText>
    <CadText transform="translate(821 168) rotate(90)" $s={9}>00</CadText>
  </Canvas>
);

export default function App() {
  return (
    <Root>
      <Global />
      <TitleBar>
        <AppLogo>
          <rect width="18" height="18" rx="3" fill="#1e93e6" />
          <path d="M9 3v12M3 8h12" stroke="#fff" strokeWidth="1.800" /><circle cx="5" cy="8" r="1.800" fill="none" stroke="#fff" /><circle cx="13" cy="8" r="1.800" fill="none" stroke="#fff" />
        </AppLogo>
        <TitleText>广联达BIM钢筋算量软件 GGJ2013 - [C:\Users\Administrator.PC-20141127NRHM\Desktop\白龙村-2018-02-02-19-24-35(2666版).GGJ12]</TitleText>
        <WinBtns>
          <WinBtn><path d="M1 6h10" stroke="#111" /></WinBtn>
          <WinBtn><path d="M1.500 3.500h7v7h-7zM3.500 3.500v-2h7v7h-2" fill="none" stroke="#111" /></WinBtn>
          <WinBtn><path d="M0 0l12 12M12 0L0 12" stroke="#111" /></WinBtn>
        </WinBtns>
      </TitleBar>
      <Badge>72</Badge>
      <Ime>
        <ImeS>S</ImeS>
        <ImeBar>
          <ImeZh>中</ImeZh>
          <ImeSvg><circle cx="5" cy="6" r="2" fill="none" stroke="currentColor" /><path d="M11 9c1 1 1 3-1 4" fill="none" stroke="currentColor" strokeWidth="2" /></ImeSvg>
          <ImeSvg><circle cx="8" cy="8" r="7" fill="none" stroke="currentColor" strokeWidth="1.400" /><path d="M4.500 9c1 3 6 3 7 0M5.500 6h1M9.500 6h1" fill="none" stroke="currentColor" /></ImeSvg>
          <ImeSvg><rect x="5.500" y="1" width="5" height="9" rx="2.500" fill="currentColor" /><path d="M3 8c0 6 10 6 10 0M8 12v3M5 15h6" fill="none" stroke="currentColor" /></ImeSvg>
          <ImeSvg><rect x="1" y="3" width="14" height="10" rx="1" fill="currentColor" /><path d="M3 5.500h10M3 8h10M5 10.500h6" stroke="#fff" strokeDasharray="1.500 1" /></ImeSvg>
          <ImeSvg><circle cx="6" cy="4.500" r="3" fill="#a8bcc8" /><path d="M1 13c0-4 3-5 5-5s4 1 5 3" fill="#a8bcc8" /><rect x="7" y="10" width="8" height="4" fill="none" stroke="#a8bcc8" /></ImeSvg>
          <ImeSvg><path d="M5 2L1 5l2 3 1-1v7h8V7l1 1 2-3-4-3-3 2z" fill="currentColor" /></ImeSvg>
          <ImeSvg><path d="M3 15l-2-2 7-7c-1-3 2-6 6-5l-3 3 2 2 3-3c1 4-2 7-5 6z" fill="currentColor" /></ImeSvg>
        </ImeBar>
      </Ime>

      <MenuBar>
        {MENU.map(([l, w]) => <MenuItem key={l} $w={w}>{l}</MenuItem>)}
        <Tools items={[t('newchange', '新建变更', 70), c(12)]} />
        <Tool $w={67} $p={4}>
          <MiniSvg><circle cx="12" cy="12" r="11" fill="#2aa3ee" /><circle cx="8.500" cy="10" r="2" fill="#fff" /><circle cx="15.500" cy="10" r="2" fill="#fff" /><path d="M8 16c2 2.500 6 2.500 8 0" fill="none" stroke="#fff" strokeWidth="1.800" /></MiniSvg>
          <span>广小二</span>
        </Tool>
        <AskPanel>
          <Ask>为什么筏板XY方向布置..</Ask>
          <AskUser $p={5}>
            <MiniSvg><rect x="0" y="0" width="24" height="24" rx="3" fill="#2a8fd0" /><circle cx="12" cy="9" r="4" fill="#fff" /><path d="M4 20c1-7 15-7 16 0z" fill="#fff" /></MiniSvg>
            13907298339
          </AskUser>
          <CaretBox $w={20}><Caret /></CaretBox>
          <AskUser $p={2}>造价豆:0</AskUser>
          <Gap $w={10} />
          <MiniSvg><path d="M12 1c-5 0-7 3-7 8v6l-3 4h20l-3-4V9c0-5-2-8-7-8zM8 20c1 4 7 4 8 0z" fill="#1f8be8" /></MiniSvg>
          <Chev />
        </AskPanel>
      </MenuBar>

      <TopRow>
        <Bar $w={150}><Tools items={TB1} /><Chev /></Bar>
        <Bar $w={548}><Tools items={TB2} /><Chev /></Bar>
        <Gap $w={2} />
        <Bar $w={660}><Tools items={TB3} /><Chev /></Bar>
      </TopRow>

      <Main>
        <Left>
          <NavTitle>模块导航栏<PaneCtl><Ctl /></PaneCtl></NavTitle>
          <NavBtn>工程设置</NavBtn>
          <NavBtn>绘图输入</NavBtn>
          <TreePane>
            <TreeTools>
              <TreeBtnSvg><path d="M1 5h8M5 1v8" stroke="#0a3c34" strokeWidth="2.200" /><path d="M8 13h9M12.500 9v8" stroke="#0a8a80" strokeWidth="2.400" /></TreeBtnSvg>
              <TreeBtnSvg><path d="M2 6h8" stroke="#0a3c34" strokeWidth="2.200" /><path d="M7 11h9" stroke="#0a8a80" strokeWidth="2.400" /></TreeBtnSvg>
            </TreeTools>
            <TreeBody>
              <Tree>
                {TREE.map(r => r.g ? (
                  <Row key={r.l} $group>
                    <Down><path d="M1 1l4 4 4-4" fill="none" stroke="#444" strokeWidth="1.400" /></Down>
                    <HDotG />
                    <GroupBody><Icon n="folder" /><span>{r.l}</span></GroupBody>
                  </Row>
                ) : (
                  <Row key={r.l} $last={r.last}>
                    <HDot />
                    <RowBody $sel={r.sel}><Icon n={r.i!} /><span><Mixed t={r.l} /></span></RowBody>
                  </Row>
                ))}
              </Tree>
              <VScroll>
                <VSpace $h={6} />
                <ArrowSvg><path d="M1 7l4-4 4 4" fill="none" stroke="#555" strokeWidth="1.800" /></ArrowSvg>
                <VSpace $h={131} />
                <Thumb $h={210} />
                <VSpace $h={97} />
                <ArrowSvg><path d="M1 3l4 4 4-4" fill="none" stroke="#555" strokeWidth="1.800" /></ArrowSvg>
              </VScroll>
            </TreeBody>
            <HScroll $l={18}>
              <HArrow $side="l" $o={5}><path d="M7 1L3 5l4 4" fill="none" stroke="#555" strokeWidth="1.800" /></HArrow>
              <Thumb $w={102} />
              <HArrow $side="r" $o={20}><path d="M3 1l4 4-4 4" fill="none" stroke="#555" strokeWidth="1.800" /></HArrow>
            </HScroll>
          </TreePane>
          <NavBtn>单构件输入</NavBtn>
          <NavBtn>报表预览</NavBtn>
        </Left>
        <Split />
        <Center>
          <BarRow><Bar $w={761} $h={25}><Tools items={RA} /><Chev /></Bar></BarRow>
          <BarRow $mt={1}>
            <Bar $w={564} $h={26}><Tools items={RB1} /></Bar>
            <Bar $w={194} $h={26}><Tools items={RB2} /><Chev /></Bar>
          </BarRow>
          <BarRow $mt={3}>
            <Bar $w={647} $h={26}><Tools items={RC1} /></Bar>
            <Bar $w={31} $h={26}><Tools items={[g(7), p(23, true)]} /></Bar>
          </BarRow>
          <Cad />
          <BarRow $mt={1}>
            <Bar $w={208} $h={28}><Tools items={RD1} /></Bar>
            <Bar $w={262} $h={28}><Tools items={RD2} /></Bar>
            <Bar $w={285} $h={28}><Tools items={RD3} /><Chev /></Bar>
          </BarRow>
          <GridPane>
            <GripCol><CloseBox><path d="M.500.500h10v10h-10zM2 2l7 7M9 2l-7 7" fill="none" stroke="#666" /></CloseBox></GripCol>
            <GridBody>
              <GridBar $w={751}><Tools items={GT} /></GridBar>
              <GridTable>
                <GHead>{COLS.map(([l, w]) => <GCell key={l} $w={w}><span><Mixed t={l} /></span></GCell>)}</GHead>
                <GRow>
                  <GCell $w={33} $num><span><Mixed t="1*" /></span></GCell>
                  <GCell $w={73} $cur />
                  {COLS.slice(2).map(([l, w]) => <GCell key={l} $w={w} />)}
                </GRow>
                <GridScroll $l={17}>
                  <HArrow $side="l" $o={3}><path d="M7 1L3 5l4 4" fill="none" stroke="#555" strokeWidth="1.800" /></HArrow>
                  <Thumb $w={157} />
                  <HArrow $side="r" $o={9}><path d="M3 1l4 4-4 4" fill="none" stroke="#555" strokeWidth="1.800" /></HArrow>
                </GridScroll>
              </GridTable>
            </GridBody>
          </GridPane>
        </Center>
        <Right>
          <PropTitle>属性编辑器<PaneCtl $dark><Ctl /></PaneCtl></PropTitle>
          <PropPane>
            <PropGrid>
              <Cell $h={22} $kind="hd" />
              <Cell $h={22} $kind="hd">属性名称</Cell>
              <Cell $h={22} $kind="hdv">属性值</Cell>
              <Cell $h={22} $kind="hd">附加</Cell>
              {PROPS.map(([n, name, val]) => {
                const sel = n === '6';
                return (
                  <React.Fragment key={n}>
                    <Cell $kind={sel ? 'numsel' : 'num'}>{n}</Cell>
                    <Cell $kind={sel ? 'namesel' : 'name'} $color={sel ? '#fff' : BLUE_ROWS.has(n) ? BLUE : '#000'}><span><Mixed t={name} /></span></Cell>
                    <Cell $kind={sel ? 'valsel' : 'val'}><span><Mixed t={val ?? ''} /></span></Cell>
                    <Cell $kind="chk">{n !== '1' && <Check />}</Cell>
                  </React.Fragment>
                );
              })}
              {[['15', '其它属性'], ['24', '锚固搭接'], ['39', '显示样式']].map(([n, name]) => (
                <React.Fragment key={n}>
                  <Cell $kind="num">{n}</Cell>
                  <Cell $kind="name" $color="#8a8a8a"><PlusBox />{name}</Cell>
                  <Cell $kind="val" />
                  <Cell $kind="chk" />
                </React.Fragment>
              ))}
            </PropGrid>
          </PropPane>
        </Right>
      </Main>

      <Status>
        <StatusCell $w={148}><span><Mixed t="X=36671 Y=5124" /></span></StatusCell>
        <StatusCell $w={78}><span><Mixed t="层高:2.15m" /></span></StatusCell>
        <StatusCell $w={98}><span><Mixed t="底标高:-2.2m" /></span></StatusCell>
        <StatusCell $w={48}><span><Mixed t="0" /></span></StatusCell>
        <StatusCell $w={914}>按鼠标左键指定第一个角点，或拾取构件图元</StatusCell>
        <StatusCell $w={72}><span><Mixed t="345.5 FPS" /></span></StatusCell>
      </Status>

      <Task>
        <Start><TaskSvg><path d="M4 6l7-1v6.500H4zM12 4.800L20 4v7.500h-8zM4 12.500h7V19l-7-1zM12 12.500h8V20l-8-1z" fill="#fff" /></TaskSvg></Start>
        <Search>
          <TaskSvg><circle cx="10" cy="12" r="8.500" fill="none" stroke="#e8e8e8" strokeWidth="2.400" /></TaskSvg>
          <span>在这里输入你要搜索的内容</span>
          <Grow />
          <Slot $w={40}><TraySvg><path d="M12 3c-2 0-3 1-3 3v5c0 2 1 3 3 3s3-1 3-3V6c0-2-1-3-3-3zM7 10c0 7 10 7 10 0M12 16v5" fill="none" stroke="#aaa" strokeWidth="1.300" /></TraySvg></Slot>
        </Search>
        <Slot $w={48}><TaskSvg><path d="M8.500 4.500h7v15h-7zM5 7H3v10h2M19 7h2v10h-2" fill="none" stroke="#fff" strokeWidth="1.400" /></TaskSvg></Slot>
        <Slot $w={52}><TaskSvg><path d="M11 11C9 9 8 4 5 3 2 2 1 6 3 8s5 3 8 3zM13 11c2-2 3-7 6-8 3-1 4 3 2 5s-5 3-8 3zM11 13c-2 2-3 7-6 8-3 1-4-3-2-5s5-3 8-3zM13 13c2 2 3 7 6 8 3 1 4-3 2-5s-5-3-8-3z" fill="#e8e8e8" /></TaskSvg></Slot>
        <Slot $w={52}><TaskSvg><path d="M5 13h14c0-6-3-8-7-8s-7 3-7 7c0 6 3 8 7 8 3 0 5-1 6-3" fill="none" stroke="#e8e8e8" strokeWidth="2.800" /><path d="M3 21c1-4 7-14 16-18" fill="none" stroke="#fff" /></TaskSvg></Slot>
        <Slot $w={52}><TaskSvg><path d="M15 7c-4-3-9 0-9 5s5 8 9 5c1-2-1-4-3-3" fill="none" stroke="#b0b0b0" strokeWidth="2.200" /><path d="M16 1c2 0 3 2 3 4l1 3h-8l1-3c0-2 1-4 3-4zM14.500 9h3l-1.500 2z" fill="#f0a020" /></TaskSvg></Slot>
        <Slot $w={8}><Sep $w={3} /></Slot>
        <Gap $w={13} />
        <Slot $w={40}><TaskSvg><path d="M4 13h16c0-6-3-9-8-9s-8 4-8 8c0 6 4 9 8 9 3 0 5-1 7-3v-4c-3 3-9 4-10-1" fill="none" stroke="#0a78d8" strokeWidth="3.200" /></TaskSvg></Slot>
        <Slot $w={40}><TaskSvg><path d="M5 13h15c0-6-3-9-8-9s-8 4-8 8c0 6 4 9 8 9 3 0 5-1 7-3" fill="none" stroke="#2a9ce8" strokeWidth="3" /><path d="M2 22C0 17 9 7 22 2" fill="none" stroke="#f0c020" strokeWidth="1.600" /></TaskSvg></Slot>
        <Slot $w={40}><TaskSvg><path d="M3 5h7l2 2h9v14H3z" fill="#f0c860" /><rect x="3" y="9" width="18" height="12" fill="#f8dc88" /><rect x="9" y="15" width="6" height="6" fill="#38a0e0" /></TaskSvg></Slot>
        <Slot $w={40} $u={30}><TaskSvg><circle cx="12" cy="12" r="10" fill="#7ab83c" stroke="#fff" /><path d="M6 12h12M6 12c0-6 9-7 11-2M6 12c0 6 9 7 12 2" fill="none" stroke="#fff" strokeWidth="1.800" /></TaskSvg></Slot>
        <Slot $w={40} $u={31}><TaskSvg><path d="M20 4c-7-3-15 2-15 10 0 5 4 8 8 8s7-3 6-7-6-4-7-1c3-1 4 3 1 4s-5-3-3-8 6-6 10-6z" fill="#1a8be0" /></TaskSvg></Slot>
        <Slot $w={40} $u={38} $act><TaskSvg><rect x="1" y="1" width="22" height="22" rx="4" fill="#1e93e6" /><path d="M12 4v16M5 10h14" stroke="#fff" strokeWidth="2" /><circle cx="7" cy="10" r="2.400" fill="none" stroke="#fff" /><circle cx="17" cy="10" r="2.400" fill="none" stroke="#fff" /></TaskSvg></Slot>
        <Slot $w={40} $u={30}><TaskSvg><rect x="1" y="1" width="22" height="22" rx="2" fill="#f09a20" /><rect x="5" y="6" width="13" height="15" fill="#f8ecc8" transform="rotate(-8 11 13)" /><path d="M7 10h8M7 13h8M7 16h8" stroke="#a09070" /><path d="M14 18L21 3" stroke="#a04010" strokeWidth="1.600" /></TaskSvg></Slot>
        <Gap $w={14} />
        <Slot $w={12}><Sep $w={2} /><Sep $w={4} /></Slot>
        <Slot $w={24}>链接</Slot>
        <Gap $w={21} />
        <Cpu><span>33%</span><span>CPU使用</span></Cpu>
        <Gap $w={16} />
        <Slot $w={20}><TraySvg><path d="M4 16l8-8 8 8" fill="none" stroke="#fff" strokeWidth="1.600" /></TraySvg></Slot>
        <Gap $w={2} />
        <Slot $w={24}><TraySvg><path d="M12 3c-4 0-5 3-5 6v6l-2 3h14l-2-3V9c0-3-1-6-5-6zM10 20c1 2 3 2 4 0z" fill="#fff" /></TraySvg></Slot>
        <Slot $w={24}><TraySvg><rect x="7" y="9" width="14" height="9" fill="none" stroke="#fff" strokeWidth="1.400" /><rect x="9" y="11" width="6" height="5" fill="#fff" /><path d="M3 3v5M7 3v5M2 8h6v3l-3 2z" fill="none" stroke="#fff" /></TraySvg></Slot>
        <Slot $w={24}><TraySvg><path d="M3 20c0-9 8-16 17-16M7 20c0-6 6-12 13-12M11 20c0-4 4-8 9-8" fill="none" stroke="#aaa" strokeWidth="1.400" strokeDasharray="1.500 1" /><circle cx="15" cy="20" r="2" fill="#fff" /></TraySvg></Slot>
        <Slot $w={21}><TraySvg><path d="M2 9h4l5-5v16l-5-5H2z" fill="none" stroke="#fff" strokeWidth="1.200" /><path d="M14 8c2 2 2 6 0 8M17 6c3 3 3 9 0 12" fill="none" stroke="#fff" /></TraySvg></Slot>
        <Slot $w={34}><TaskSvg><rect x="1" y="5" width="22" height="14" fill="none" stroke="#fff" /><path d="M3 8h18M3 11h18" stroke="#fff" strokeDasharray="1.500 1" /><path d="M6 15h12" stroke="#fff" /></TaskSvg></Slot>
        <Slot $w={22}><span>中</span></Slot>
        <Gap $w={3} />
        <Slot $w={28}><SogouTile>S</SogouTile></Slot>
        <Gap $w={4} />
        <Clock><span>14:15</span><span>2018/8/1</span></Clock>
        <Slot $w={44}><TaskSvg><path d="M4 4h16v14h-5l-3 3-3-3H4z" fill="none" stroke="#fff" strokeWidth="1.400" /></TaskSvg></Slot>
        <Grow />
        <Edge />
      </Task>
    </Root>
  );
}
